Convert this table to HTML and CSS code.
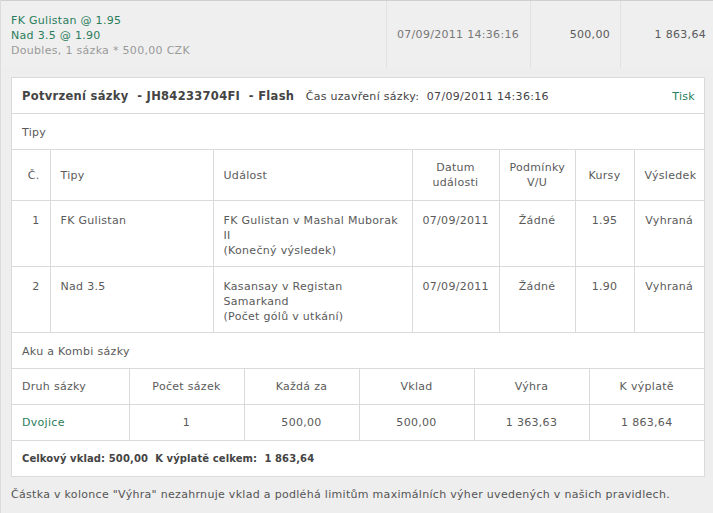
FILE: index.html
```html
<!DOCTYPE html>
<html lang="cs">
<head>
<meta charset="utf-8">
<title>Potvrzení sázky</title>
<link rel="stylesheet" href="styles.css">
</head>
<body>
<div class="page">
  <div class="top-row">
    <div class="cell sel">
      <div class="green">FK Gulistan @ 1.95</div>
      <div class="green">Nad 3.5 @ 1.90</div>
      <div class="muted">Doubles, 1 sázka * 500,00 CZK</div>
    </div>
    <div class="cell date">07/09/2011 14:36:16</div>
    <div class="cell stake">500,00</div>
    <div class="cell ret">1 863,64</div>
  </div>

  <div class="content">
    <div class="panel">
      <div class="panel-head">
        <div class="title"><b>Potvrzení sázky &nbsp;- JH84233704FI &nbsp;- Flash</b>&nbsp;&nbsp; Čas uzavření sázky: &nbsp;07/09/2011 14:36:16</div>
        <a class="print">Tisk</a>
      </div>
      <div class="section">Tipy</div>
      <table class="grid tips">
        <colgroup>
          <col class="c1"><col class="c2"><col class="c3"><col class="c4"><col class="c5"><col class="c6"><col>
        </colgroup>
        <thead>
          <tr>
            <th class="r">Č.</th>
            <th class="l">Tipy</th>
            <th class="l">Událost</th>
            <th>Datum<br>události</th>
            <th>Podmínky<br>V/U</th>
            <th>Kursy</th>
            <th>Výsledek</th>
          </tr>
        </thead>
        <tbody>
          <tr>
            <td class="r">1</td>
            <td class="l">FK Gulistan</td>
            <td class="l">FK Gulistan v Mashal Muborak II<br>(Konečný výsledek)</td>
            <td>07/09/2011</td>
            <td>Žádné</td>
            <td>1.95</td>
            <td>Vyhraná</td>
          </tr>
          <tr>
            <td class="r">2</td>
            <td class="l">Nad 3.5</td>
            <td class="l">Kasansay v Registan Samarkand<br>(Počet gólů v utkání)</td>
            <td>07/09/2011</td>
            <td>Žádné</td>
            <td>1.90</td>
            <td>Vyhraná</td>
          </tr>
        </tbody>
      </table>
      <div class="section">Aku a Kombi sázky</div>
      <table class="grid combi">
        <colgroup>
          <col class="k1"><col class="k2"><col class="k3"><col class="k4"><col class="k5"><col>
        </colgroup>
        <thead>
          <tr>
            <th class="l">Druh sázky</th>
            <th>Počet sázek</th>
            <th>Každá za</th>
            <th>Vklad</th>
            <th>Výhra</th>
            <th>K výplatě</th>
          </tr>
        </thead>
        <tbody>
          <tr>
            <td class="l green">Dvojice</td>
            <td>1</td>
            <td>500,00</td>
            <td>500,00</td>
            <td>1 363,63</td>
            <td>1 863,64</td>
          </tr>
        </tbody>
      </table>
      <div class="total"><b>Celkový vklad: 500,00 &nbsp;K výplatě celkem: &nbsp;1 863,64</b></div>
    </div>
    <p class="note">Částka v kolonce "Výhra" nezahrnuje vklad a podléhá limitům maximálních výher uvedených v našich pravidlech.</p>
  </div>
</div>
</body>
</html>
```

FILE: styles.css
```css
* { box-sizing: border-box; }
html, body {
  margin: 0;
  padding: 0;
  background: #eeeeee;
}
body {
  font-family: "DejaVu Sans", Verdana, sans-serif;
  font-size: 11px;
  letter-spacing: 0.3px;
  color: #5a5a5a;
  line-height: 15px;
}
.page {
  width: 713px;
  height: 513px;
  border-left: 1px solid #dcdcdc;
  overflow: hidden;
}
.green { color: #2b7d5c; }
.muted { color: #9a9a9a; }

.top-row {
  display: flex;
  height: 68px;
  border-top: 1px solid #cfcfcf;
  background: #efefef;
}
.top-row .cell {
  border-right: 1px solid #e2e2e2;
  display: flex;
  align-items: center;
}
.top-row .sel {
  width: 386px;
  flex-direction: column;
  align-items: flex-start;
  justify-content: center;
  padding-left: 10px;
  padding-top: 1px;
}
.top-row .date {
  width: 144px;
  padding-left: 10px;
  color: #777;
}
.top-row .stake {
  width: 90px;
  justify-content: flex-end;
  padding-right: 10px;
}
.top-row .ret {
  flex: 1;
  justify-content: flex-end;
  padding-right: 7px;
  border-right: none;
}

.content {
  padding: 9px 8px 0 10px;
}
.panel {
  background: #ffffff;
  border: 1px solid #dadada;
  width: 694px;
}
.panel-head {
  display: flex;
  align-items: center;
  justify-content: space-between;
  height: 36px;
  padding: 2px 9px 0 10px;
  border-bottom: 1px solid #dadada;
  color: #444;
}
.panel-head b {
  color: #444;
  font-size: 11.5px;
}
.print { color: #2b7d5c; }
.section {
  height: 35px;
  display: flex;
  align-items: center;
  padding-left: 10px;
  padding-top: 2px;
}
table.grid {
  width: 100%;
  border-collapse: collapse;
  table-layout: fixed;
}
.grid th, .grid td {
  border: 1px solid #dadada;
  text-align: center;
  font-weight: normal;
  padding: 0 10px;
}
.grid tr > :first-child { border-left: none; }
.grid tr > :last-child { border-right: none; }
.grid .l { text-align: left; }
.grid .r { text-align: right; }
.tips th { height: 51px; }
.tips td { height: 66px; vertical-align: top; padding-top: 12px; }
.tips .c1 { width: 38px; }
.tips .c2 { width: 163px; }
.tips .c3 { width: 199px; }
.tips .c4 { width: 87px; }
.tips .c5 { width: 76px; }
.tips .c6 { width: 59px; }
.combi th, .combi td { height: 36px; }
.combi .k1 { width: 117px; }
.combi .k2, .combi .k3, .combi .k4, .combi .k5 { width: 115px; }
.total {
  height: 35px;
  display: flex;
  align-items: center;
  padding-left: 10px;
  color: #444;
  font-size: 10px;
  letter-spacing: 0.1px;
}
.note {
  margin: 10px 0 0 0;
  color: #555;
}
```
